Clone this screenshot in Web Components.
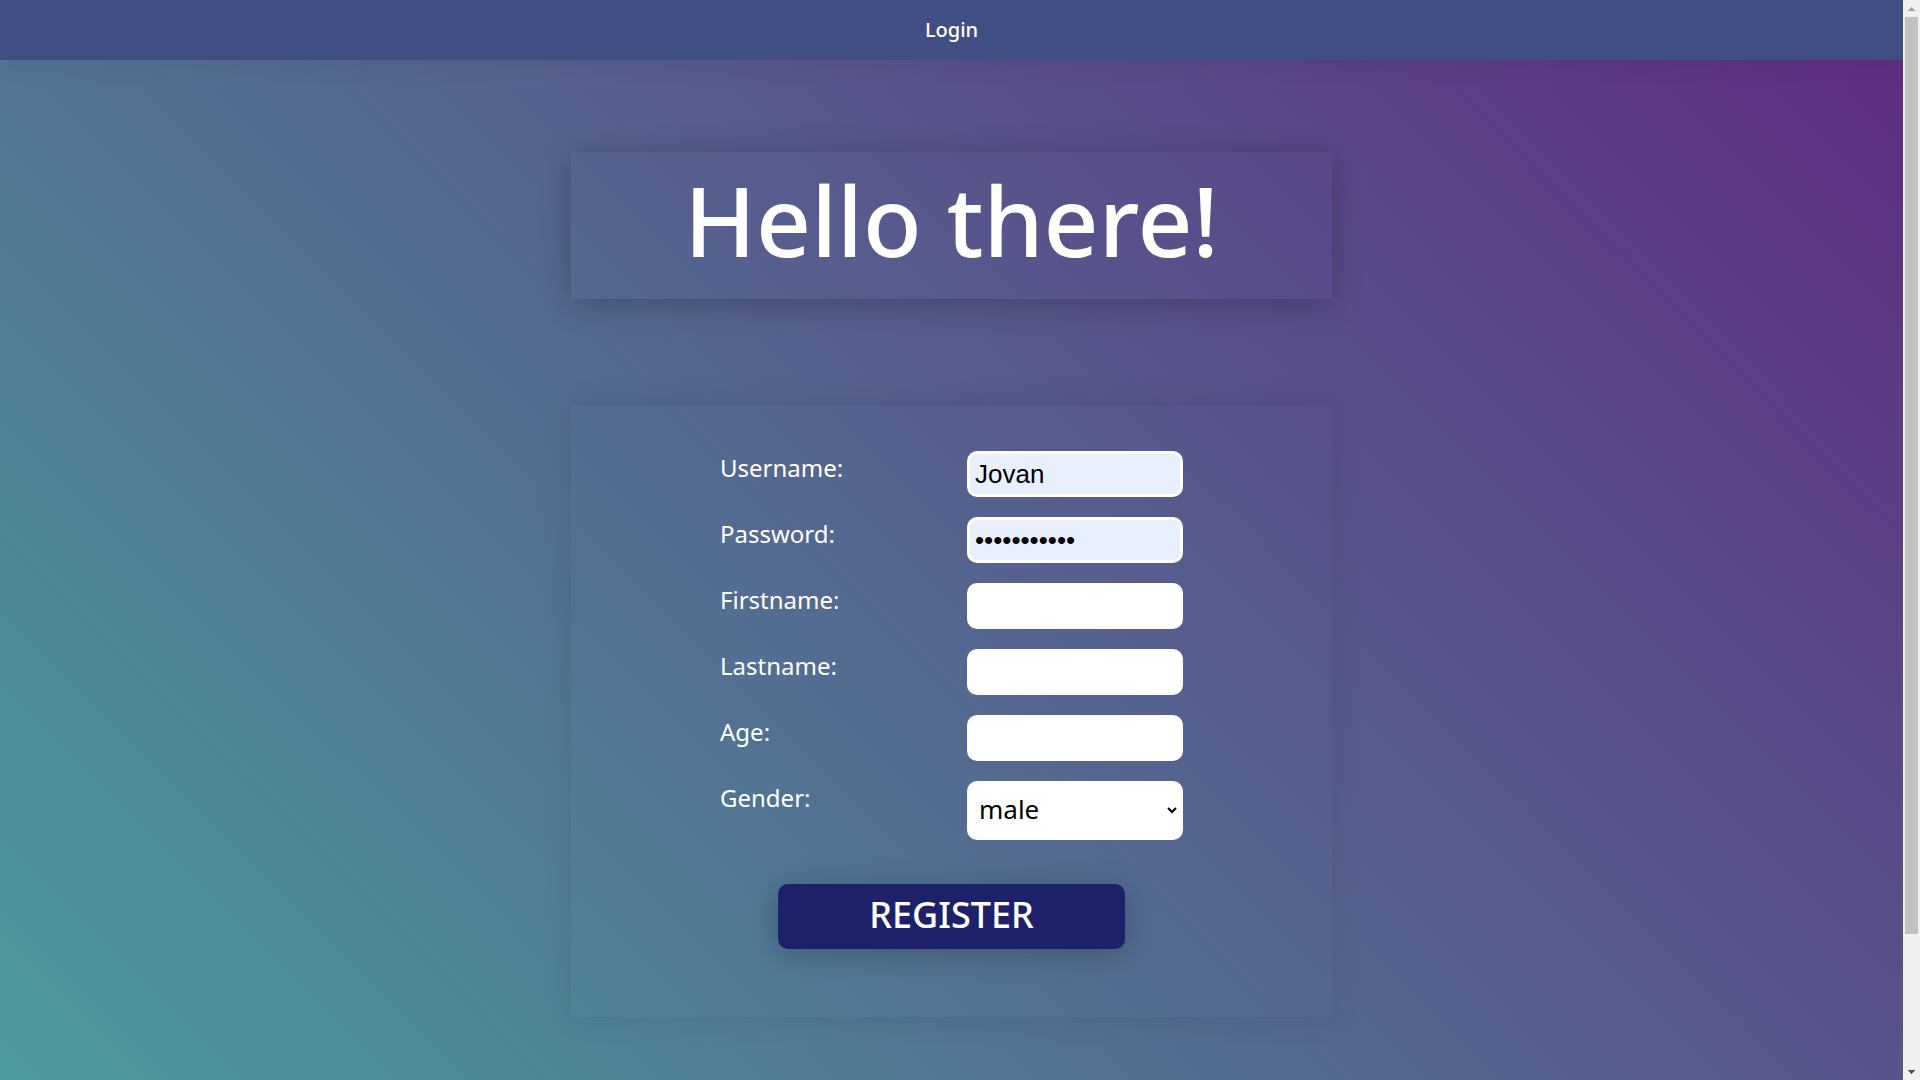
<!DOCTYPE html>
<html lang="en">
<head>
<meta charset="utf-8">
<title>Register</title>
<style>
html, body { margin: 0; height: 100%; }
body { font-family: "Noto Sans", "Liberation Sans", sans-serif; font-weight: 500; color: #fff; overflow: hidden; }
</style>
</head>
<body>
<page-shell>
  <nav-bar slot="nav"><nav-link href="#login">Login</nav-link></nav-bar>
  <hello-banner>Hello there!</hello-banner>
  <register-form></register-form>
</page-shell>
<script>
const define = (name, html, setup) => {
  const template = document.createElement('template');
  template.innerHTML = html;
  customElements.define(name, class extends HTMLElement {
    constructor() {
      super();
      this.attachShadow({ mode: 'open' }).append(template.content.cloneNode(true));
    }
    connectedCallback() { if (setup) setup(this, this.shadowRoot); }
  });
};

define('scroll-rail', `
  <style>
    :host { display: flex; flex-direction: column; align-items: center; flex: 0 0 17px; background: #f0f0f0; }
    svg { display: block; width: 17px; height: 17px; flex: none; }
    .track { flex: 1; width: 13px; }
    .thumb { height: 87.7%; background: #c1c1c1; }
  </style>
  <svg viewBox="0 0 17 17" shape-rendering="crispEdges"><path d="M8 7h1v1h1v1h1v1h1v1H5v-1h1V9h1V8h1z" fill="#a3a3a3"/></svg>
  <div class="track"><div class="thumb"></div></div>
  <svg viewBox="0 0 17 17" shape-rendering="crispEdges"><path d="M5 7h7v1h-1v1h-1v1H9v1H8v-1H7V9H6V8H5z" fill="#505050"/></svg>`);

define('page-shell', `
  <style>
    :host { display: flex; height: 100vh; }
    .view { flex: 1; min-width: 0; overflow: hidden; display: flex; flex-direction: column;
      background: linear-gradient(45deg, #4b9b9d, #5f2b81); }
    main { flex: 1; display: flex; flex-direction: column; align-items: center; gap: 107px; padding-top: 92px; }
  </style>
  <div class="view">
    <slot name="nav"></slot>
    <main><slot></slot></main>
  </div>
  <scroll-rail aria-hidden="true"></scroll-rail>`);

define('nav-bar', `
  <style>
    :host { display: block; background: #414e84; box-shadow: 0 0 30px rgba(0,0,0,.08); }
    nav { display: flex; justify-content: center; align-items: center; height: 60px; }
  </style>
  <nav><slot></slot></nav>`);

define('nav-link', `
  <style>
    a { color: inherit; text-decoration: none; font-size: 20px; line-height: 28px; }
  </style>
  <a><slot></slot></a>`, (el, root) => {
  root.querySelector('a').href = el.getAttribute('href');
});

define('hello-banner', `
  <style>
    :host { display: block; width: 40%; box-shadow: 0 5px 30px rgba(0,0,0,.24); }
    h1 { margin: 0; padding-bottom: 11px; font-size: 96px; font-weight: 500; line-height: 136px; text-align: center; white-space: nowrap; }
  </style>
  <h1><slot></slot></h1>`);

define('form-field', `
  <style>
    :host { display: flex; justify-content: space-between; align-items: flex-start; }
    label { font-size: 24px; font-weight: 400; line-height: 34px; }
    input, select { box-sizing: border-box; width: 216px; margin: 0; border: 3px solid #fff; border-radius: 10px;
      background: #fff; color: #000; }
    input { height: 46px; padding: 0 5px; font: 26px "Liberation Sans", sans-serif; }
    input.filled { background: #e8f0fe; }
    select { height: 59px; padding: 0 5px 3px; font: 26px "Noto Sans", sans-serif; }
  </style>
  <label for="control"></label>`, (el, root) => {
  const label = root.querySelector('label');
  if (root.querySelector('#control')) return;
  label.textContent = el.getAttribute('label');
  const options = el.getAttribute('options');
  const control = document.createElement(options ? 'select' : 'input');
  control.id = 'control';
  if (options) {
    options.split(',').forEach(text => control.add(new Option(text)));
  } else {
    control.type = el.getAttribute('type') || 'text';
    control.value = el.getAttribute('value') || '';
    control.classList.toggle('filled', control.value !== '');
  }
  root.append(control);
});

define('submit-button', `
  <style>
    :host { display: block; }
    button { display: block; width: 100%; height: 65px; margin: 0; padding: 0 0 4px; border: 0; border-radius: 10px;
      background: #1d2169; color: #fff; font: 500 36px/48px "Noto Sans", sans-serif;
      box-shadow: 0 5px 30px rgba(0,0,0,.24); }
  </style>
  <button type="submit"><slot></slot></button>`);

define('register-form', `
  <style>
    :host { display: block; width: 40%; box-shadow: 0 0 30px rgba(0,0,0,.1); }
    form { display: flex; flex-direction: column; align-items: center; gap: 44px; padding: 45px 0 68px; }
    .fields { display: flex; flex-direction: column; gap: 20px; width: 463px; }
    submit-button { width: 347px; }
  </style>
  <form>
    <div class="fields">
      <form-field label="Username:" value="Jovan"></form-field>
      <form-field label="Password:" type="password" value="abcdefghijk"></form-field>
      <form-field label="Firstname:"></form-field>
      <form-field label="Lastname:"></form-field>
      <form-field label="Age:"></form-field>
      <form-field label="Gender:" options="male,female"></form-field>
    </div>
    <submit-button>REGISTER</submit-button>
  </form>`);
</script>
</body>
</html>
